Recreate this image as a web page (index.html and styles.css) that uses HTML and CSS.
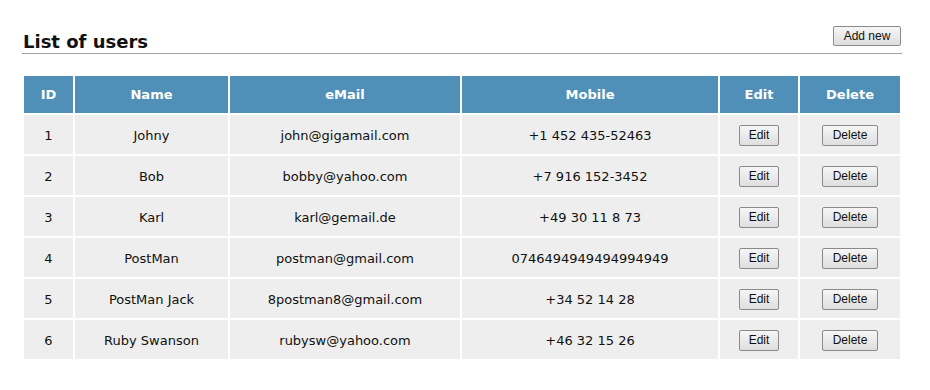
FILE: index.html
```html
<!DOCTYPE html>
<html>
<head>
<meta charset="utf-8">
<link rel="stylesheet" href="styles.css">
</head>
<body>
<div class="page">
  <div class="head">
    <h1 class="title">List of users</h1>
    <button class="btn btn-add">Add new</button>
  </div>
  <table class="users">
    <colgroup>
      <col class="c-id"><col class="c-name"><col class="c-mail"><col class="c-mob"><col class="c-edit"><col class="c-del">
    </colgroup>
    <thead>
      <tr><th>ID</th><th>Name</th><th>eMail</th><th>Mobile</th><th>Edit</th><th>Delete</th></tr>
    </thead>
    <tbody>
      <tr><td>1</td><td>Johny</td><td>john@gigamail.com</td><td>+1 452 435-52463</td><td><button class="btn btn-edit">Edit</button></td><td><button class="btn btn-del">Delete</button></td></tr>
      <tr><td>2</td><td>Bob</td><td>bobby@yahoo.com</td><td>+7 916 152-3452</td><td><button class="btn btn-edit">Edit</button></td><td><button class="btn btn-del">Delete</button></td></tr>
      <tr><td>3</td><td>Karl</td><td>karl@gemail.de</td><td>+49 30 11 8 73</td><td><button class="btn btn-edit">Edit</button></td><td><button class="btn btn-del">Delete</button></td></tr>
      <tr><td>4</td><td>PostMan</td><td>postman@gmail.com</td><td>0746494949494994949</td><td><button class="btn btn-edit">Edit</button></td><td><button class="btn btn-del">Delete</button></td></tr>
      <tr><td>5</td><td>PostMan Jack</td><td>8postman8@gmail.com</td><td>+34 52 14 28</td><td><button class="btn btn-edit">Edit</button></td><td><button class="btn btn-del">Delete</button></td></tr>
      <tr><td>6</td><td>Ruby Swanson</td><td>rubysw@yahoo.com</td><td>+46 32 15 26</td><td><button class="btn btn-edit">Edit</button></td><td><button class="btn btn-del">Delete</button></td></tr>
    </tbody>
  </table>
</div>
</body>
</html>
```
FILE: styles.css
```css
html, body {
  margin: 0;
  padding: 0;
  background: #ffffff;
}
body {
  font-family: "DejaVu Sans", "Liberation Sans", sans-serif;
  color: #111;
}
.page {
  width: 880px;
  padding: 26px 0 0 22px;
}
.head {
  display: flex;
  align-items: flex-start;
  justify-content: space-between;
  height: 27px;
  border-bottom: 1px solid #a0a0a0;
}
.title {
  margin: 6px 0 0 1px;
  font-size: 18px;
  font-weight: bold;
  line-height: 20px;
  color: #111;
}
.btn {
  font-family: "Liberation Sans", Arial, sans-serif;
  font-size: 12px;
  color: #111;
  background: linear-gradient(#f6f6f6, #dedede);
  border: 1px solid #8a8a8a;
  border-radius: 2px;
  padding: 0;
  height: 21px;
  line-height: 19px;
  cursor: pointer;
}
.btn-add {
  width: 68px;
  height: 20px;
  margin-right: 1px;
}
.btn-edit { width: 40px; }
.btn-del { width: 56px; }
.users {
  margin-top: 20px;
  width: 880px;
  table-layout: fixed;
  border-collapse: separate;
  border-spacing: 2px;
  font-size: 13px;
}
.c-id { width: 49px; }
.c-name { width: 153px; }
.c-mail { width: 230px; }
.c-mob { width: 256px; }
.c-edit { width: 78px; }
.c-del { width: 100px; }
.users th {
  background: #4f8fb8;
  color: #fff;
  font-weight: bold;
  height: 37px;
  padding: 0;
  text-align: center;
}
.users td {
  background: #eeeeee;
  height: 37px;
  padding: 2px 0 0;
  text-align: center;
}
```
